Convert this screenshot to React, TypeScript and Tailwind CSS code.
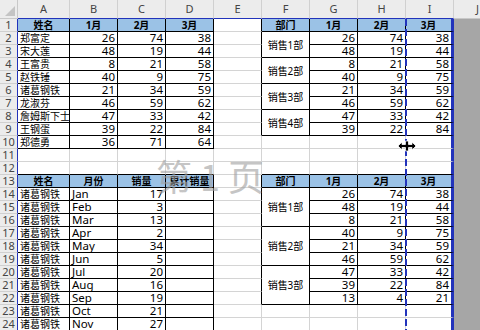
import React from 'react';

type Cell = { t?: string; a?: 'l' | 'r' | 'c'; b?: boolean; fill?: boolean; span?: number };

const LETTERS = ['', 'A', 'B', 'C', 'D', 'E', 'F', 'G', 'H', 'I', 'J'];

function inTable(r: number, c: number) {
  if (c >= 1 && c <= 4 && r >= 1 && r <= 10) return true;
  if (c >= 6 && c <= 9 && r >= 1 && r <= 9) return true;
  if (c >= 1 && c <= 4 && r >= 13) return true;
  if (c >= 6 && c <= 9 && r >= 13 && r <= 22) return true;
  return false;
}

const data: Record<string, Cell> = {};
const covered = new Set<string>();
const set = (r: number, c: number, cell: Cell) => {
  data[`${r},${c}`] = cell;
};

// Table 1
['姓名', '1月', '2月', '3月'].forEach((t, i) => set(1, i + 1, { t, a: 'c', b: true, fill: true }));
const t1: [string, number, number, number][] = [
  ['郑富定', 26, 74, 38],
  ['宋大莲', 48, 19, 44],
  ['王富贵', 8, 21, 58],
  ['赵铁锤', 40, 9, 75],
  ['诸葛钢铁', 21, 34, 59],
  ['龙淑芬', 46, 59, 62],
  ['詹姆斯下士', 47, 33, 42],
  ['王钢蛋', 39, 22, 84],
  ['郑德勇', 36, 71, 64],
];
t1.forEach((row, i) => {
  set(i + 2, 1, { t: row[0], a: 'l' });
  set(i + 2, 2, { t: String(row[1]), a: 'r' });
  set(i + 2, 3, { t: String(row[2]), a: 'r' });
  set(i + 2, 4, { t: String(row[3]), a: 'r' });
});

// Table 2
['部门', '1月', '2月', '3月'].forEach((t, i) => set(1, i + 6, { t, a: 'c', b: true, fill: true }));
const nums: [number, number, number][] = [
  [26, 74, 38],
  [48, 19, 44],
  [8, 21, 58],
  [40, 9, 75],
  [21, 34, 59],
  [46, 59, 62],
  [47, 33, 42],
  [39, 22, 84],
  [13, 4, 21],
];
for (let i = 0; i < 8; i++) {
  const r = i + 2;
  if (i % 2 === 0) set(r, 6, { t: `销售${i / 2 + 1}部`, a: 'c', span: 2 });
  else covered.add(`${r},6`);
  set(r, 7, { t: String(nums[i][0]), a: 'r' });
  set(r, 8, { t: String(nums[i][1]), a: 'r' });
  set(r, 9, { t: String(nums[i][2]), a: 'r' });
}

// Table 3
['姓名', '月份', '销量', '累计销量'].forEach((t, i) => set(13, i + 1, { t, a: 'c', b: true, fill: true }));
const months = ['Jan', 'Feb', 'Mar', 'Apr', 'May', 'Jun', 'Jul', 'Aug', 'Sep', 'Oct', 'Nov'];
const sales = [17, 3, 13, 2, 34, 5, 20, 16, 19, 21, 27];
months.forEach((m, i) => {
  set(14 + i, 1, { t: '诸葛钢铁', a: 'l' });
  set(14 + i, 2, { t: m, a: 'l' });
  set(14 + i, 3, { t: String(sales[i]), a: 'r' });
});

// Table 4
['部门', '1月', '2月', '3月'].forEach((t, i) => set(13, i + 6, { t, a: 'c', b: true, fill: true }));
for (let i = 0; i < 9; i++) {
  const r = i + 14;
  if (i % 3 === 0) set(r, 6, { t: `销售${i / 3 + 1}部`, a: 'c', span: 3 });
  else covered.add(`${r},6`);
  set(r, 7, { t: String(nums[i][0]), a: 'r' });
  set(r, 8, { t: String(nums[i][1]), a: 'r' });
  set(r, 9, { t: String(nums[i][2]), a: 'r' });
}

function Corner() {
  return (
    <div className="bg-[#ececec] border-r border-r-[#c8c8c8] border-b border-b-[#c8c8c8] flex items-end justify-end p-[2px]">
      <svg width="10" height="10" viewBox="0 0 10 10">
        <polygon points="10,0 10,10 0,10" fill="#c4c4c4" />
      </svg>
    </div>
  );
}

const CJK = /[\u4e00-\u9fff]/;

export default function App() {
  const items: React.ReactNode[] = [];
  for (let r = 0; r <= 24; r++) {
    for (let c = 0; c <= 10; c++) {
      const key = `${r},${c}`;
      if (r === 0 && c === 0) {
        items.push(<Corner key={key} />);
        continue;
      }
      if (r === 0) {
        const bb = c <= 9 ? 'border-b border-b-[#2233bb]' : 'border-b border-b-[#c8c8c8]';
        items.push(
          <div
            key={key}
            className={`bg-[#ececec] border-r border-r-[#d0d0d0] ${bb} flex items-center justify-center text-[11px] text-[#444]`}
          >
            {LETTERS[c]}
          </div>
        );
        continue;
      }
      if (c === 0) {
        items.push(
          <div
            key={key}
            className="bg-[#ececec] border-r border-r-[#2233bb] border-b border-b-[#d0d0d0] flex items-center justify-center text-[11px] text-[#444] leading-[12px]"
          >
            {r}
          </div>
        );
        continue;
      }
      if (c === 10) {
        items.push(<div key={key} className="bg-[#a6a6a6]" />);
        continue;
      }
      if (covered.has(key)) continue;
      const cell = data[key] || {};
      const span = cell.span || 1;
      const lastRow = r + span - 1;
      let rb: string;
      if (c === 9) rb = 'border-r-[3px] border-r-[#2233bb]';
      else if (inTable(r, c) || inTable(r, c + 1)) rb = 'border-r border-r-black';
      else rb = 'border-r border-r-[#d4d4d4]';
      const bb =
        inTable(lastRow, c) || inTable(lastRow + 1, c)
          ? 'border-b border-b-black'
          : 'border-b border-b-[#d4d4d4]';
      const align =
        cell.a === 'r' ? 'justify-end' : cell.a === 'c' ? 'justify-center' : 'justify-start';
      const spanCls = span === 2 ? 'row-span-2' : span === 3 ? 'row-span-3' : '';
      const size = cell.t && CJK.test(cell.t) ? 'text-[10px]' : 'text-[11.5px]';
      items.push(
        <div
          key={key}
          className={`${rb} ${bb} ${spanCls} ${align} ${size} ${cell.fill ? 'bg-[#9bc2e6]' : 'bg-white'} ${
            cell.b ? 'font-bold' : ''
          } flex items-center whitespace-nowrap px-[2px] leading-[12px] text-black`}
        >
          {cell.t}
        </div>
      );
    }
  }

  return (
    <div className="relative w-[480px] h-[330px] overflow-hidden bg-white font-['Noto_Sans','Noto_Sans_CJK_SC',sans-serif]">
      <div className="grid grid-cols-[18px_52px_48px_48px_48px_48px_48px_48px_48px_48px_48px] grid-rows-[19px_repeat(24,13px)]">
        {items}
      </div>
      {/* page-break dashed line */}
      <div className="absolute left-[405px] top-[19px] w-[2px] h-[311px] bg-[repeating-linear-gradient(to_bottom,#2233bb_0_7px,transparent_7px_10px)]" />
      {/* watermark */}
      <div className="pointer-events-none absolute left-[156px] top-[157px] text-[36px] leading-none text-[#a0a0a0] opacity-60 font-['Noto_Sans_CJK_SC',sans-serif] whitespace-pre">
        第 1 页
      </div>
      {/* resize cursor */}
      <svg className="absolute left-[397px] top-[140px]" width="20" height="12" viewBox="0 0 20 12">
        <path
          d="M1 6 L5 2 L5 4.5 L8.5 4.5 L8.5 1 L11.5 1 L11.5 4.5 L15 4.5 L15 2 L19 6 L15 10 L15 7.5 L11.5 7.5 L11.5 11 L8.5 11 L8.5 7.5 L5 7.5 L5 10 Z"
          fill="black"
          stroke="white"
          strokeWidth="0.8"
        />
      </svg>
    </div>
  );
}
